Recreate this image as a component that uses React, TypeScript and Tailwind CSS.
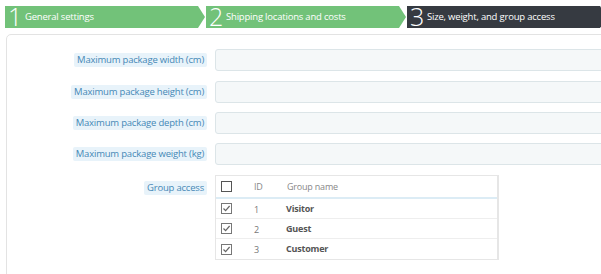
const steps = [
    { n: "1", label: "General settings", done: true },
    { n: "2", label: "Shipping locations and costs", done: true },
    { n: "3", label: "Size, weight, and group access", done: false },
];

const fields = [
    "Maximum package width (cm)",
    "Maximum package height (cm)",
    "Maximum package depth (cm)",
    "Maximum package weight (kg)",
];

const groups = [
    { id: 1, name: "Visitor" },
    { id: 2, name: "Guest" },
    { id: 3, name: "Customer" },
];

function Checkbox({ checked }: { checked?: boolean }) {
    return (
        <svg width="11" height="11" viewBox="0 0 11 11" className="block">
            <rect x="0.5" y="0.5" width="10" height="10" fill="#fff" stroke={checked ? "#777" : "#555"} />
            {checked && <path d="M2.5 5.5 L4.6 7.6 L8.6 3" fill="none" stroke="#666" strokeWidth="1.2" />}
        </svg>
    );
}

export default function App() {
    return (
        <div className="w-[601px] h-[274px] overflow-hidden bg-white font-['Open_Sans',sans-serif]">
            <div className="flex gap-[1px] pt-[6px] pl-[5px]">
                {steps.map((s) => (
                    <div
                        key={s.n}
                        className={`flex items-center h-[22px] w-[200px] shrink-0 pl-[3px] text-white [clip-path:polygon(0_0,calc(100%-7px)_0,100%_50%,calc(100%-7px)_100%,0_100%)] ${s.done ? "bg-[#72c279]" : "bg-[#363a41]"}`}
                    >
                        <span className="text-[25px] font-light leading-none w-[16px] -mt-[1px]">{s.n}</span>
                        <span className="text-[9.5px] tracking-[-0.2px] ml-[1px] whitespace-nowrap">{s.label}</span>
                    </div>
                ))}
            </div>

            <div className="ml-[6px] mt-[6px] w-[640px] h-[260px] border border-[#e3e3e3] rounded-[5px] pt-[14px]">
                <div className="flex flex-col gap-[9px]">
                    {fields.map((f, i) => (
                        <div key={f} className={`flex items-center ${i === 1 ? "mt-[1px]" : ""}`}>
                            <div className="w-[200px] flex justify-end">
                                <span className="bg-[#e8f3fa] text-[#4588b6] text-[9.5px] tracking-[-0.2px] leading-[14px] px-[3px] rounded-[2px] whitespace-nowrap">{f}</span>
                            </div>
                            <div className="ml-[8px] h-[22px] w-[420px] bg-[#f5f8f9] border border-[#dce5e8] rounded-[3px]" />
                        </div>
                    ))}
                </div>

                <div className="flex mt-[10px]">
                    <div className="w-[200px] flex justify-end pt-[6px]">
                        <span className="bg-[#e8f3fa] text-[#4588b6] text-[9.5px] tracking-[-0.2px] leading-[14px] h-[14px] px-[3px] rounded-[2px] whitespace-nowrap">Group access</span>
                    </div>
                    <div className="ml-[8px] w-[284px] border border-[#e6e6e6] border-r-2 text-[9px] tracking-[-0.2px]">
                        <div className="flex items-center h-[23px] border-b-2 border-[#dcecf5] text-[#888]">
                            <div className="w-[38px] pl-[5px]"><Checkbox /></div>
                            <div className="w-[33px]">ID</div>
                            <div>Group name</div>
                        </div>
                        {groups.map((g, i) => (
                            <div key={g.id} className={`flex items-center h-[20px] ${i < groups.length - 1 ? "border-b border-[#eeeeee]" : ""}`}>
                                <div className="w-[38px] pl-[5px]"><Checkbox checked /></div>
                                <div className="w-[32px] text-[#777] pt-[2px]">{g.id}</div>
                                <div className="font-bold text-[#555]">{g.name}</div>
                            </div>
                        ))}
                    </div>
                </div>
            </div>
        </div>
    );
}
